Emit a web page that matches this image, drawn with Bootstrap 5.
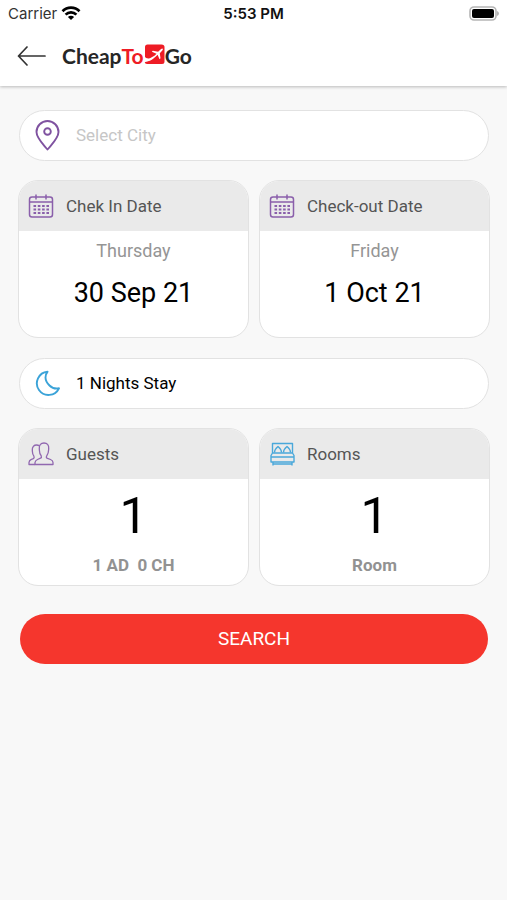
<!DOCTYPE html>
<html lang="en">
<head>
<meta charset="utf-8">
<meta name="viewport" content="width=device-width, initial-scale=1">
<title>CheapToGo – Hotel search</title>
<link href="https://cdn.jsdelivr.net/npm/bootstrap@5.3.0/dist/css/bootstrap.min.css" rel="stylesheet">
<style>
  body { font-family: Roboto, "Liberation Sans", sans-serif; background: #f8f8f8; color: #000; }
  .status-bar { height: 28px; padding: 0 8px; font: 500 15px/28px Inter, "Liberation Sans", sans-serif; color: #111; }
  .status-bar > * { flex: 1 1 0; }
  .carrier { font-weight: 400; color: #333; }
  .clock { font-weight: 600; }
  .top-bar { height: 58px; padding: 0 17px 2px; }
  .app-header { background: #fff; box-shadow: 0 1px 3px rgba(0, 0, 0, .25); }
  .brand { font: 700 21px/28px Lato, "Open Sans", sans-serif; color: #262626; }
  .brand-red { color: #ee1c25; }
  .content-area { padding: 24px 17px 24px 18px; }
  .pill { height: 51px; margin: 0 1px; padding: 0 14px 2px; border: 1px solid #e2e2e2; border-radius: 26px; background: #fff; font-size: 17px; line-height: 24px; }
  .pill input { font-size: 17px; line-height: 24px; color: #000; }
  .pill input::placeholder { color: #c6c6c6; opacity: 1; }
  .tiles { margin: 19px 0 20px; gap: 10px; }
  .tile { flex: 1 1 0; min-width: 0; height: 158px; border: 1px solid #e2e2e2; border-radius: 20px; background: #fff; color: #000; overflow: hidden; }
  .tile-head { height: 50px; padding: 0 9px; gap: 12px; background: #eaeaea; color: #555; font-size: 17px; line-height: 24px; }
  .tile-day { margin-top: 8px; font-size: 18px; line-height: 24px; color: #959595; }
  .tile-date { margin-top: 12px; font-size: 27px; line-height: 36px; }
  .tile-count { margin-top: 9px; font-size: 50px; line-height: 56px; }
  .tile-note { margin-top: 9px; font-size: 17px; line-height: 24px; font-weight: 700; color: #929292; white-space: pre; }
  .btn-search { height: 50px; margin: 8px 2px 0; border-radius: 25px; background: #f5362d; color: #fff; font-size: 19px; line-height: 24px; }
  .btn-search:hover { background: #dd2c24; color: #fff; }
</style>
<script src="https://cdn.jsdelivr.net/npm/bootstrap@5.3.0/dist/js/bootstrap.bundle.min.js"></script>
</head>
<body>
<header class="app-header">
  <div class="status-bar d-flex align-items-center">
    <div class="carrier d-flex align-items-center gap-1">
      <span>Carrier</span>
      <svg width="20" height="16" viewBox="0 0 20 16" fill="none" stroke="#000" stroke-width="2.7" aria-hidden="true">
        <path d="M1.500 5.200a12 12 0 0 1 17 0"/><path d="M4.600 8.600a7.600 7.600 0 0 1 10.800 0"/>
        <path d="M10 14 6.900 11a4.400 4.400 0 0 1 6.200 0z" fill="#000" stroke="none"/>
      </svg>
    </div>
    <div class="clock text-center">5:53 PM</div>
    <div class="d-flex justify-content-end">
      <svg width="31" height="17" viewBox="0 0 31 17" aria-hidden="true">
        <rect x="2" y="1" width="26" height="13" rx="4" fill="#fff" stroke="#b5b5b5" stroke-width="1.600"/>
        <rect x="4" y="3" width="22" height="9" rx="2" fill="#000"/>
        <path d="M29 5v5q2-.8 2-2.500t-2-2.500z" fill="#b5b5b5"/>
      </svg>
    </div>
  </div>
  <nav class="top-bar d-flex align-items-center gap-3" aria-label="Main">
    <button type="button" class="btn border-0 p-0 d-flex" aria-label="Back">
      <svg width="29" height="20" viewBox="0 0 29 20" fill="none" stroke="#333" stroke-width="1.700" stroke-linecap="round" stroke-linejoin="round"><path d="M28 10H1.500M10 1 1.500 10 10 19"/></svg>
    </button>
    <a href="#" class="brand d-flex align-items-center text-decoration-none" aria-label="CheapToGo home">
      <span>Cheap</span><span class="brand-red">To</span>
      <svg width="21" height="24" viewBox="0 0 21 24" aria-hidden="true">
        <path d="M1 13V3Q1 .5 3.500.5h14Q20.500.5 20.500 3v14.500q0 2.500-2.500 2.500H3Q1 20 .5 17.500 6 17 10 13.500L5 15Q2 15.200 1 13z" fill="#ee1c25"/>
        <path d="M0 12.500q2 2.700 6 1.700l4.800-2.700 1.700-1.700-4.700-2 1-1 5.300.9 2.700-2.500q1.300-1 1.900-.5t-.4 1.900l-2.500 2.700.7 5-1 1-1.900-4.500-1.800 1.600Q7 17.300 0 18.200v-1.700q3-.1 4.500-1-3.500 0-4.500-3z" fill="#fff"/>
      </svg>
      <span>Go</span>
    </a>
  </nav>
</header>

<main class="content-area">
  <form onsubmit="return false">
    <div class="pill d-flex align-items-center">
      <label for="city" class="d-flex me-3" aria-label="City">
        <svg width="26" height="32" viewBox="0 0 26 32" fill="none" stroke="#7f52a0" stroke-width="1.900"><path d="M13.500 30.500C8.500 24.500 2.500 19 2.500 13a11 11 0 0 1 22 0C24.500 19 18.500 24.500 13.500 30.500z" stroke-linejoin="round"/><circle cx="13.500" cy="12.500" r="3.300"/></svg>
      </label>
      <input id="city" type="text" class="flex-grow-1 border-0 bg-transparent p-0" placeholder="Select City">
    </div>

    <div class="tiles d-flex">
      <button type="button" class="tile d-flex flex-column p-0">
        <span class="tile-head w-100 d-flex align-items-center">
          <svg width="26" height="26" viewBox="0 0 26 26" fill="none" stroke="#8a5fab" stroke-width="1.500"><rect x="1.500" y="4" width="23" height="20" rx="2.500"/><path d="M1.500 9h23M8 1.500v5M18 1.500v5"/><path d="M5.500 13h15.500M5.500 16.500h15.500M5.500 20h15.500" stroke-width="2.200" stroke-dasharray="2.600 1.700"/></svg>
          <span>Chek In Date</span>
        </span>
        <span class="tile-day w-100">Thursday</span>
        <span class="tile-date w-100">30 Sep 21</span>
      </button>
      <button type="button" class="tile d-flex flex-column p-0">
        <span class="tile-head w-100 d-flex align-items-center">
          <svg width="26" height="26" viewBox="0 0 26 26" fill="none" stroke="#8a5fab" stroke-width="1.500"><rect x="1.500" y="4" width="23" height="20" rx="2.500"/><path d="M1.500 9h23M8 1.500v5M18 1.500v5"/><path d="M5.500 13h15.500M5.500 16.500h15.500M5.500 20h15.500" stroke-width="2.200" stroke-dasharray="2.600 1.700"/></svg>
          <span>Check-out Date</span>
        </span>
        <span class="tile-day w-100">Friday</span>
        <span class="tile-date w-100">1 Oct 21</span>
      </button>
    </div>

    <div class="pill d-flex align-items-center">
      <svg class="me-3" width="26" height="26" viewBox="0 0 26 26" fill="none" stroke="#3ba3d8" stroke-width="1.900" stroke-linejoin="round" aria-hidden="true"><path d="M13.500 1.800A11.600 11.600 0 1 0 25 18.300Q19.500 19.500 15.500 15.500 11.500 11.500 11.500 7.500 11.600 4 13.500 1.800z"/></svg>
      <span>1 Nights Stay</span>
    </div>

    <div class="tiles d-flex">
      <button type="button" class="tile d-flex flex-column p-0">
        <span class="tile-head w-100 d-flex align-items-center">
          <svg width="26" height="26" viewBox="0 0 26 26" fill="none" stroke="#9168b0" stroke-width="1.300" stroke-linejoin="round"><path d="M7 23.500v-2q.3-2 2.500-3l3-1.300q1.400-.7.7-2.500C11 12.500 11.500 10 11.300 7.500 11 4 13 2 16 2s5 2 4.700 5.500c-.2 2.500.1 5-1.900 7.200-.9 1.800-.5 2.300.7 2.700l3 1.100q2.500 1 2.500 3v2z"/><path d="M7 23.500H1v-2q.2-2 2-2.800l2.300-1q1.400-.7.6-2.500C4 13 4.500 11 4.300 9 4 5.500 6.300 4 8.500 4q1.700 0 2.900.7"/></svg>
          <span>Guests</span>
        </span>
        <span class="tile-count w-100">1</span>
        <span class="tile-note w-100">1 AD  0 CH</span>
      </button>
      <button type="button" class="tile d-flex flex-column p-0">
        <span class="tile-head w-100 d-flex align-items-center">
          <svg width="26" height="26" viewBox="0 0 26 26" fill="none" stroke="#4aa8da" stroke-width="1.400" stroke-linejoin="round"><path d="M3.500 12V2.500h20V12M3.500 12h20l1.500 2.500v6.500H2v-6.500zM2 16h23M4 21v3.500M23 21v3.500M4 23h19"/><path d="M5.500 11.500c0-3 1.300-4.200 3.500-6 2.200 1.800 3.500 3 3.500 6M14.500 11.500c0-3 1.300-4.200 3.500-6 2.200 1.800 3.500 3 3.500 6"/></svg>
          <span>Rooms</span>
        </span>
        <span class="tile-count w-100">1</span>
        <span class="tile-note w-100">Room</span>
      </button>
    </div>

    <div class="d-grid">
      <button type="submit" class="btn btn-search border-0 p-0">SEARCH</button>
    </div>
  </form>
</main>
</body>
</html>
